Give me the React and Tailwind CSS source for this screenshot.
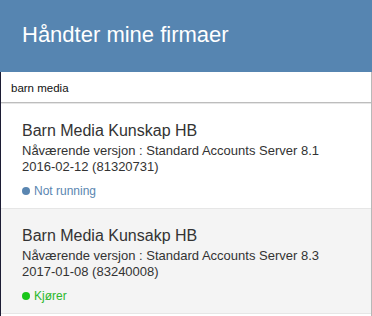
import React from "react";

const companies = [
  {
    name: "Barn Media Kunskap HB",
    version: ["Nåværende versjon : Standard Accounts Server 8.1", "2016-02-12 (81320731)"],
    status: "Not running",
    running: false,
  },
  {
    name: "Barn Media Kunsakp HB",
    version: ["Nåværende versjon : Standard Accounts Server 8.3", "2017-01-08 (83240008)"],
    status: "Kjører",
    running: true,
  },
];

const CompanyRow = ({ company, shaded }) => (
  <div
    className={`h-[105px] px-[21px] pt-[17px] border-t border-[#e6e6e6] ${
      shaded ? "bg-[#f4f4f4]" : "bg-white"
    }`}
  >
    <h2 className="text-[16px] leading-[20px] text-[#333]">{company.name}</h2>
    <p className="mt-[2px] text-[13px] leading-[16px] text-[#333]">
      {company.version[0]}
      <br />
      {company.version[1]}
    </p>
    <div
      className={`mt-[8px] flex items-center gap-[4px] text-[12px] leading-[16px] ${
        company.running ? "text-[#2cb82c]" : "text-[#5a86b1]"
      }`}
    >
      <span
        className={`w-[8px] h-[8px] rounded-full ${
          company.running ? "bg-[#19c619]" : "bg-[#5a86b1]"
        }`}
      />
      {company.status}
    </div>
  </div>
);

export default function App() {
  return (
    <div
      className="w-[372px] h-[316px] overflow-hidden bg-white flex flex-col"
      style={{ fontFamily: '"Liberation Sans", Arial, sans-serif' }}
    >
      <header className="h-[72px] bg-[#5685b1] flex items-center px-[22px] pb-[3px] shrink-0">
        <h1 className="text-[22px] text-white leading-none">Håndter mine firmaer</h1>
      </header>
      <div className="flex-1 flex flex-col border-l border-l-[#1c1c34] border-r border-r-[#b8b8b8]">
        <div className="h-[31px] flex items-center px-[10px] pt-[3px] text-[11.5px] text-[#111] border-b border-[#bdbdbd]">
          barn media
        </div>
        {companies.map((c, i) => (
          <CompanyRow key={c.name} company={c} shaded={i === 1} />
        ))}
        <div className="flex-1 border-t border-[#e6e6e6] bg-white" />
      </div>
    </div>
  );
}
